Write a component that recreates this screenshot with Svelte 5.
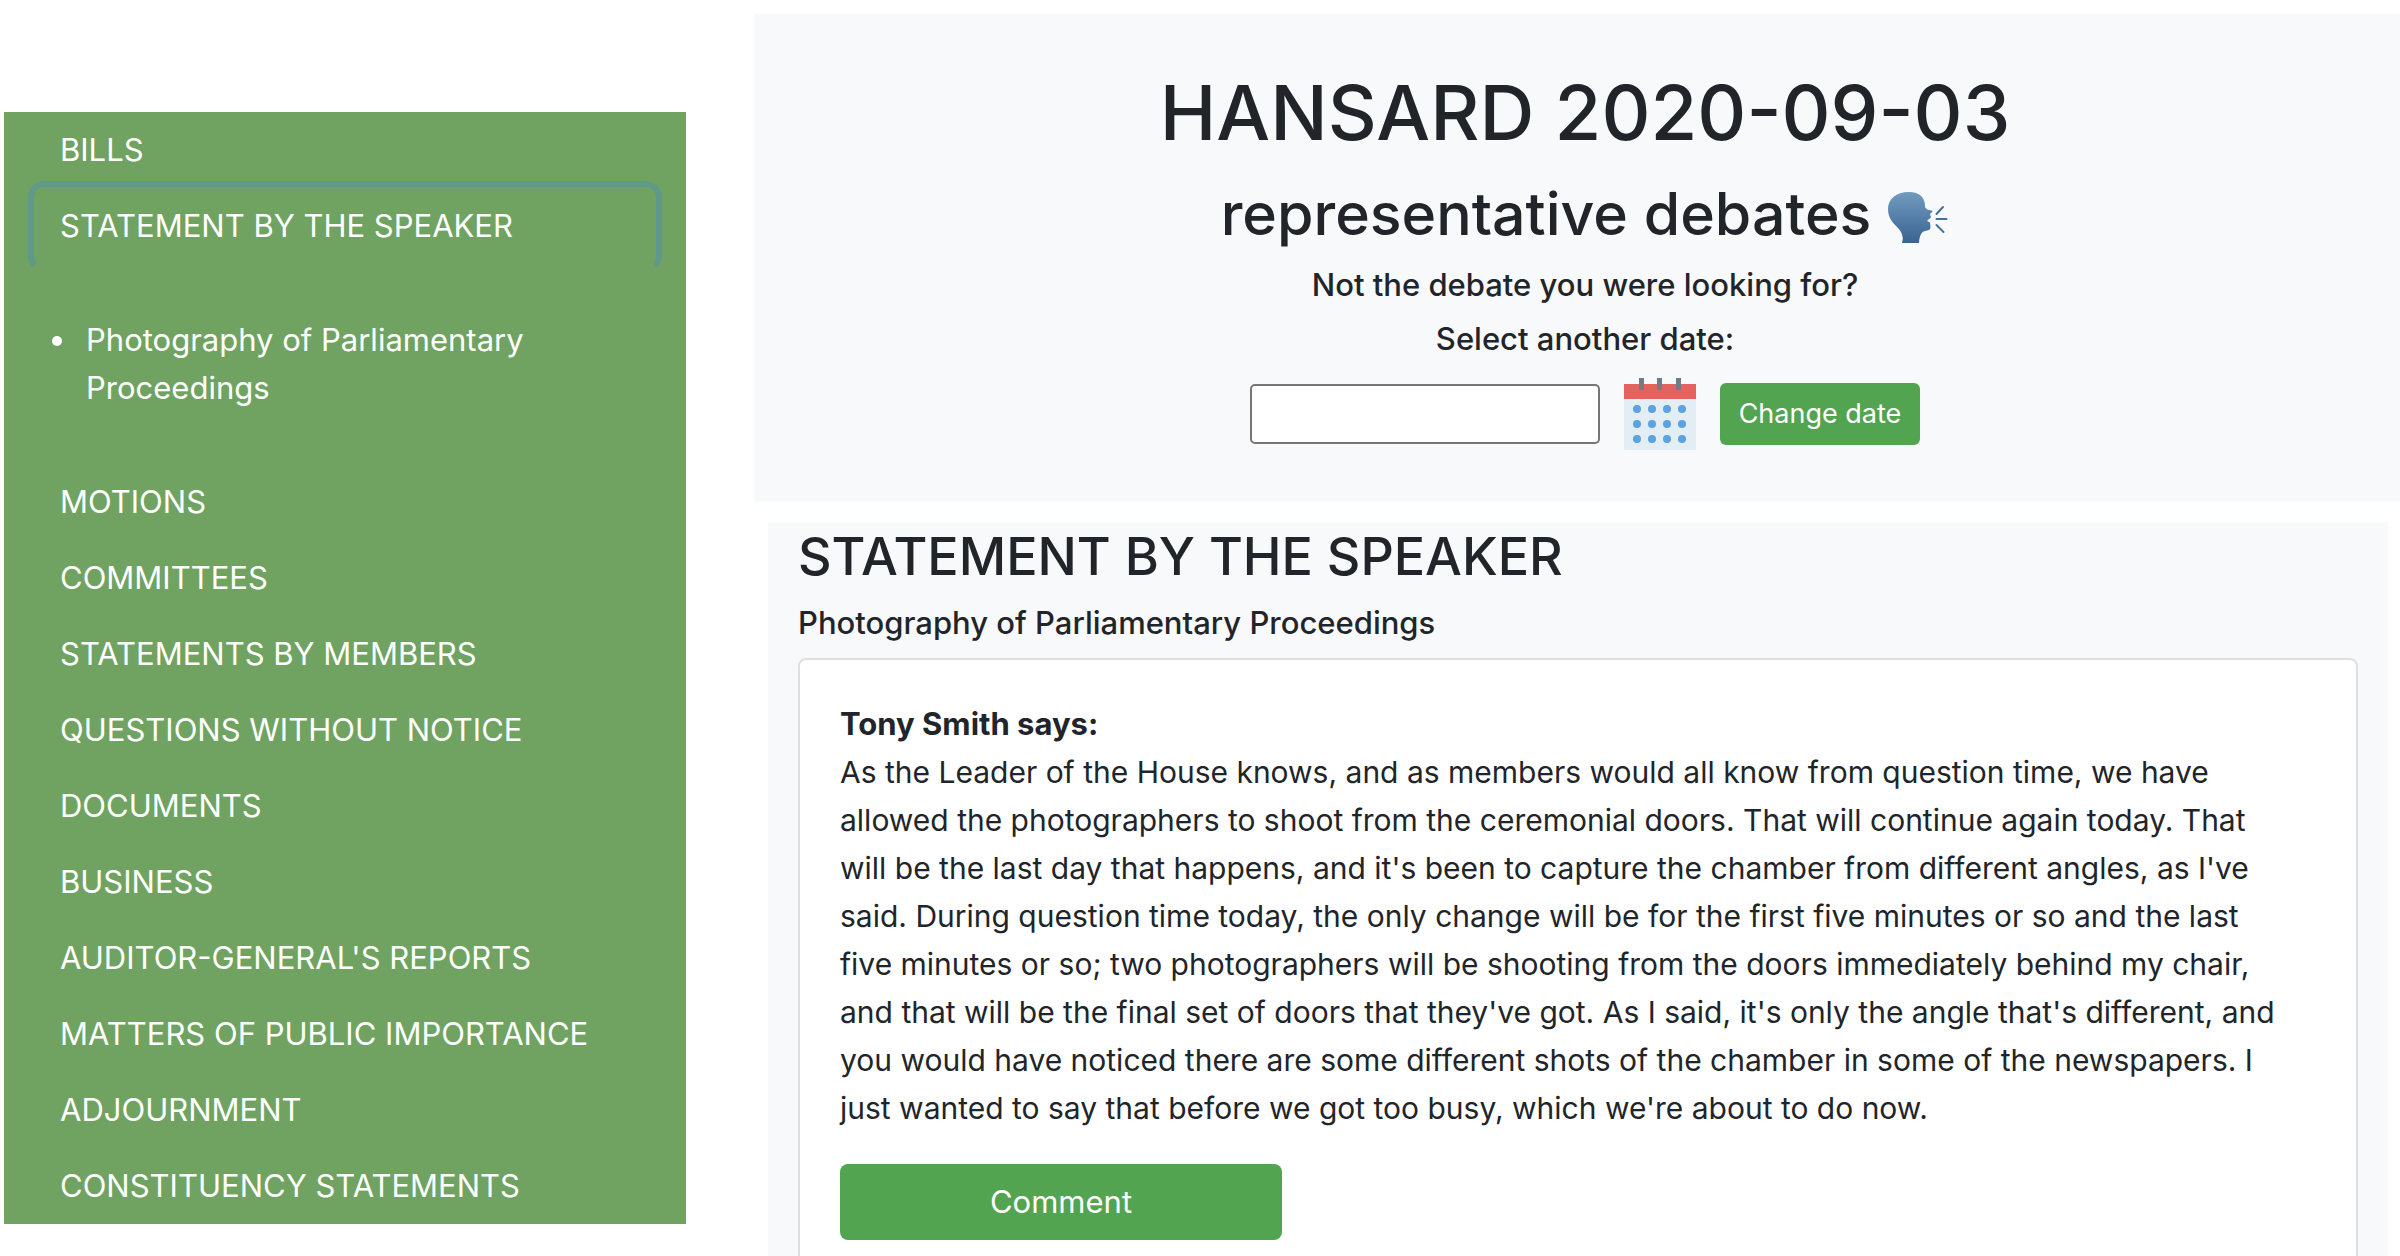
<script>
  const topics = [
    { title: 'BILLS' },
    { title: 'STATEMENT BY THE SPEAKER', active: true, items: ['Photography of Parliamentary Proceedings'] },
    { title: 'MOTIONS' },
    { title: 'COMMITTEES' },
    { title: 'STATEMENTS BY MEMBERS' },
    { title: 'QUESTIONS WITHOUT NOTICE' },
    { title: 'DOCUMENTS' },
    { title: 'BUSINESS' },
    { title: "AUDITOR-GENERAL'S REPORTS" },
    { title: 'MATTERS OF PUBLIC IMPORTANCE' },
    { title: 'ADJOURNMENT' },
    { title: 'CONSTITUENCY STATEMENTS' }
  ];
  const dotColumns = [13, 28, 43, 58];
  const dotRows = [31, 46, 61];
  let date = $state('');
</script>

<div class="layout">
  <nav class="sidebar" aria-label="Debate topics">
    {#each topics as topic}
      <a class="topic" class:active={topic.active} href="#topic">{topic.title}</a>
      {#if topic.items}
        <ul class="subtopics">
          {#each topic.items as item}
            <li><a href="#debate">{item}</a></li>
          {/each}
        </ul>
      {/if}
    {/each}
  </nav>

  <main>
    <header class="hero">
      <h1>HANSARD 2020-09-03</h1>
      <h2>
        <span>representative debates</span>
        <svg class="speaker" viewBox="0 0 62 54" aria-hidden="true">
          <defs>
            <linearGradient id="head" x1="0" y1="0" x2="0" y2="1">
              <stop offset="0" stop-color="#729bbf" />
              <stop offset="0.5" stop-color="#557fa9" />
              <stop offset="1" stop-color="#3a6490" />
            </linearGradient>
          </defs>
          <path fill="url(#head)" d="M22 1C33 1 38 7 38 15C38 18 41 19 45 19.500C46 20 45.500 21 43 23L43.500 25C44.500 26 44 27 42 28L40 30L43 31.500L43.500 36C43.500 39 41 39.500 38 40C34 41 32.500 45 32 52H15C17 46 15 42 11 37C6 32 1 27 1 18C1 8 9 1 22 1Z" />
          <path stroke="#44729d" stroke-width="2" stroke-linecap="round" fill="none" d="M49.500 23L56 16M49.500 28H59.500M49.500 34L56.500 41" />
        </svg>
      </h2>
      <h5>Not the debate you were looking for?</h5>
      <h5><label for="date">Select another date:</label></h5>
      <form class="date-form" onsubmit={(e) => e.preventDefault()}>
        <input id="date" type="text" bind:value={date} />
        <svg class="calendar" viewBox="0 0 72 72" aria-hidden="true">
          <path fill="#e2edf4" d="M0 21H72V72H0Z" />
          <path fill="#e3635e" d="M0 6H72V21H0Z" />
          <path fill="#6f7d86" d="M15 0H20V12H15ZM33 0H38V12H33ZM52 0H57V12H52Z" />
          {#each dotRows as cy}
            {#each dotColumns as cx}
              <circle {cx} {cy} r="4" fill="#5aa2e0" />
            {/each}
          {/each}
        </svg>
        <button class="change">Change date</button>
      </form>
    </header>

    <section class="debate">
      <h3>STATEMENT BY THE SPEAKER</h3>
      <h4>Photography of Parliamentary Proceedings</h4>
      <article class="card">
        <strong>Tony Smith says:</strong>
        <p>
          As the Leader of the House knows, and as members would all know from question time, we have
          allowed the photographers to shoot from the ceremonial doors. That will continue again today. That
          will be the last day that happens, and it's been to capture the chamber from different angles, as I've
          said. During question time today, the only change will be for the first five minutes or so and the last
          five minutes or so; two photographers will be shooting from the doors immediately behind my chair,
          and that will be the final set of doors that they've got. As I said, it's only the angle that's different, and
          you would have noticed there are some different shots of the chamber in some of the newspapers. I
          just wanted to say that before we got too busy, which we're about to do now.
        </p>
        <button class="comment">Comment</button>
      </article>
    </section>
  </main>
</div>

<style>
  :global(body) {
    margin: 0;
    background: #fff;
    color: #212529;
    font-family: Inter, sans-serif;
    font-size: 31px;
    line-height: 48px;
  }

  .layout {
    display: grid;
    grid-template-columns: minmax(0, 682fr) minmax(0, 1646fr);
    gap: 68px;
    align-items: start;
    height: 100vh;
    padding-left: 4px;
    box-sizing: border-box;
    overflow: hidden;
  }

  .sidebar {
    margin-top: 112px;
    background: #70a361;
  }

  a {
    color: #fff;
    text-decoration: none;
  }

  .topic {
    display: block;
    position: relative;
    padding: 14px 56px;
  }

  .active::after {
    content: '';
    position: absolute;
    inset: -7px 24px -8px;
    border: 6px solid #619988;
    border-bottom-color: transparent;
    border-radius: 16px;
  }

  .subtopics {
    margin: 0;
    padding: 52px 56px 52px 48px;
    list-style: none;
  }

  .subtopics li {
    display: flex;
    gap: 24px;
  }

  .subtopics li::before {
    content: '';
    flex: none;
    width: 10px;
    height: 10px;
    margin-top: 20px;
    border-radius: 50%;
    background: #fff;
  }

  h1,
  h2,
  h3,
  h4,
  h5 {
    margin: 0;
    font-weight: 500;
  }

  .hero {
    display: flex;
    flex-direction: column;
    align-items: center;
    margin-top: 14px;
    padding: 50px 0 52px 16px;
    background: #f8f9fb;
  }

  h1 {
    margin-bottom: 16px;
    font-size: 76px;
    line-height: 96px;
  }

  h2 {
    display: flex;
    align-items: center;
    gap: 16px;
    margin-bottom: 14px;
    font-size: 59px;
    line-height: 76px;
  }

  .speaker {
    width: 62px;
    height: 54px;
    margin-top: 8px;
  }

  h5 {
    margin-bottom: 16px;
    font-size: 31px;
    line-height: 38px;
  }

  .date-form {
    display: flex;
    align-items: center;
    gap: 24px;
    margin-top: 4px;
  }

  input {
    width: 350px;
    height: 60px;
    padding: 4px 12px;
    border: 2px solid #767676;
    border-radius: 5px;
    background: #fff;
    font: inherit;
    box-sizing: border-box;
  }

  .calendar {
    width: 72px;
    height: 72px;
  }

  button {
    border: 0;
    border-radius: 6px;
    background: #53a451;
    color: #fff;
    font: inherit;
  }

  .change {
    width: 200px;
    height: 62px;
    padding: 0;
    font-size: 27px;
  }

  .debate {
    margin: 20px 12px 0 14px;
    padding: 0 30px;
    background: #f8f9fb;
  }

  h3 {
    margin-bottom: 12px;
    font-size: 52px;
    line-height: 70px;
  }

  h4 {
    margin-bottom: 16px;
    font-size: 31px;
    line-height: 38px;
  }

  .card {
    padding: 40px 64px 40px 40px;
    border: 2px solid #dfdfdf;
    border-radius: 8px;
    background: #fff;
  }

  strong {
    display: block;
    font-weight: 700;
  }

  p {
    margin: 0 0 32px;
    font-size: 30px;
  }

  .comment {
    width: 442px;
    height: 76px;
    border-radius: 8px;
  }
</style>
